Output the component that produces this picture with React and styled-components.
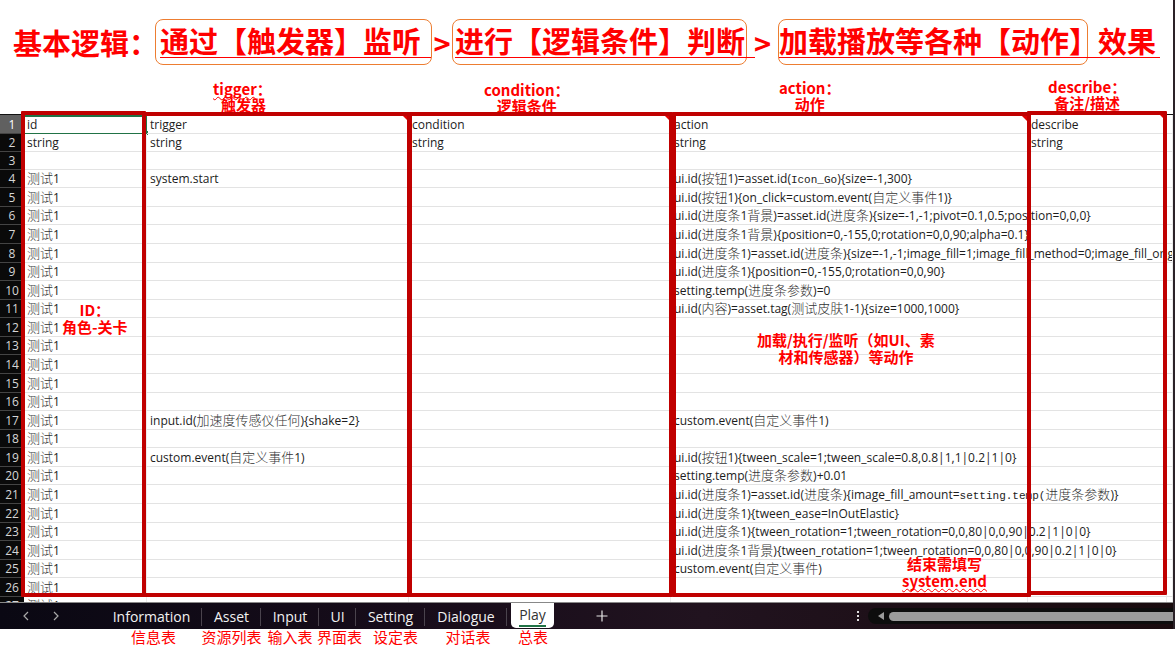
import React from "react";
import styled, { createGlobalStyle, css } from "styled-components";

const GlobalStyle = createGlobalStyle`
  * { box-sizing: border-box; }
  body { margin: 0; background: #fff; }
`;

const cjk = `"Noto Sans CJK SC", sans-serif`;
const columns = "24px 123px 262px 262px 1fr 139px 6px";
const tabColumns = "101px 101px 59px 58px 37px 69px 82px 52px 1fr";

const Page = styled.div`
  display: flex;
  flex-direction: column;
  height: 100vh;
  min-height: 400px;
  overflow: hidden;
  font-family: ${cjk};
  color: #f00;
`;

const Upper = styled.div`
  flex: 1;
  min-height: 0;
  display: flex;
  flex-direction: column;
  border-right: 2px solid #2b2228;
`;

const Title = styled.h1`
  display: flex;
  align-items: center;
  margin: 0;
  padding: 19px 0 0 13px;
  font-size: 29px;
  line-height: 36px;
  font-weight: 700;
  white-space: nowrap;
`;

const Lead = styled.span`
  flex: 0 0 142px;
  min-width: 0;
`;

const Step = styled.span`
  flex: 0 0 ${(p) => p.$width}px;
  min-width: 0;
  height: 46px;
  padding: 2px 0 0 ${(p) => p.$inset}px;
  border: 1px solid #ed7d31;
  border-radius: 8px;
`;

const Phrase = styled.span`
  display: inline-block;
  height: 36px;
  padding-right: ${(p) => p.$tail || 0}px;
  border-bottom: 1px solid #f00;
`;

const Arrow = styled.span`
  flex: 0 0 ${(p) => p.$width}px;
  min-width: 0;
  text-align: center;
`;

const Headings = styled.div`
  flex: 0 0 48px;
  display: grid;
  grid-template-columns: ${columns};
`;

const Heading = styled.div`
  grid-column: ${(p) => p.$col};
  padding: ${(p) => p.$top}px 0 0 ${(p) => p.$left}px;
  justify-self: start;
  font-size: 15px;
  line-height: 16px;
  font-weight: 700;
  text-align: center;
  white-space: nowrap;
`;

const Second = styled.div`
  padding-left: ${(p) => p.$shift || 0}px;
`;

const Misspelt = styled.span`
  text-decoration: underline wavy #f00 1px;
  text-underline-offset: 1px;
  text-decoration-skip-ink: none;
`;

const SheetArea = styled.div`
  position: relative;
  flex: 1;
  min-height: 0;
  display: flex;
`;

const Viewport = styled.div`
  flex: 1;
  min-width: 0;
  overflow: hidden;
  border-top: 1px solid #111;
  border-bottom: 1px solid #888;
`;

const Table = styled.table`
  width: 100%;
  table-layout: fixed;
  border-collapse: separate;
  border-spacing: 0;
  font-family: "Open Sans", ${cjk};
  font-size: 12px;
  line-height: 16px;
  color: #1c1c1c;

  tr { height: 18px; }
  tr:first-child, tr:nth-child(n + 5) { height: 19px; }
  tr:nth-child(7n + 6), tr:nth-child(7n + 9), tr:nth-child(7n + 11) { height: 18px; }
`;

const Col = styled.col`
  width: ${(p) => (p.$w ? `${p.$w}px` : "auto")};
`;

const RowHead = styled.th`
  padding: 1px 0 0;
  font-weight: 400;
  text-align: center;
  color: ${(p) => (p.$on ? "#fff" : "#d6d6d6")};
  background: ${(p) => (p.$on ? "#606060" : "#0a0a0a")};
  border-bottom: 1px solid #444;
`;

const Cell = styled.td`
  position: relative;
  padding: 1px 0 0 3px;
  white-space: nowrap;
  border-bottom: 1px solid #e3e3e3;
  border-right: 1px solid #ececec;
  ${(p) =>
    p.$selected &&
    css`
      padding-top: 0;
      border: 2px solid #217346;
      border-left: 0;
      border-bottom-width: 1px;
    `}
`;

const FillHandle = styled.span`
  position: absolute;
  right: -3px;
  bottom: -2px;
  width: 4px;
  height: 4px;
  background: #217346;
`;

const CommentMark = styled.span`
  position: absolute;
  top: 0;
  right: 0;
  border-top: 6px solid #e00000;
  border-left: 6px solid transparent;
`;

const Han = styled.span`
  font-family: ${cjk};
  font-size: 13px;
  line-height: 12px;
  font-weight: 300;
  color: #333;
`;

const Mono = styled.span`
  font-family: "Liberation Mono", monospace;
  font-size: 11px;
  line-height: 12px;
`;

const Frames = styled.div`
  position: absolute;
  inset: -3px 0 6px;
  display: grid;
  grid-template-columns: ${columns};
  pointer-events: none;
`;

const Frame = styled.div`
  position: relative;
  grid-row: 1;
  grid-column: ${(p) => p.$col};
  margin: ${(p) => p.$margin};
  border: 4px solid #c00000;
  border-radius: 1px;
`;

const Note = styled.div`
  position: absolute;
  left: ${(p) => p.$x}px;
  top: ${(p) => p.$y}px;
  font-size: 15px;
  line-height: 17px;
  font-weight: 700;
  text-align: center;
  white-space: nowrap;
`;

const TabBar = styled.nav`
  flex: 0 0 26px;
  display: grid;
  grid-template-columns: ${tabColumns};
  background: linear-gradient(90deg, #0a0813, #170c1a 35%, #21131f 60%, #190b0e);
`;

const Pager = styled.div`
  display: flex;
  align-items: center;
  gap: 16px;
  padding-left: 19px;
`;

const IconButton = styled.button`
  display: flex;
  padding: 0;
  border: 0;
  background: none;
  color: #a9a9a9;
`;

const Tab = styled.button`
  padding: 2px 0 0;
  border: 0;
  background: linear-gradient(#4a434d, #4a434d) right 5px / 1px 18px no-repeat;
  font-family: "Open Sans", sans-serif;
  font-size: 14px;
  line-height: 20px;
  text-align: center;
  color: #f2f2f2;
  ${(p) =>
    p.$on &&
    css`
      margin: 0 5px 1px 4px;
      padding: 0;
      border-radius: 0 0 5px 5px;
      background: #fff;
      color: #333;
    `}
`;

const TabText = styled.span`
  display: inline-block;
  border-bottom: ${(p) => (p.$on ? "2px solid #217346" : "0")};
`;

const BarEnd = styled.div`
  display: flex;
  align-items: center;
  justify-content: space-between;
  padding-left: 37px;
`;

const ScrollGroup = styled.div`
  display: flex;
  align-items: center;
  gap: 8px;
`;

const ScrollTrack = styled.div`
  display: flex;
  align-items: center;
  gap: 4px;
  width: 305px;
  height: 16px;
  padding-left: 9px;
  border-radius: 8px 0 0 8px;
  background: #0d0d0d;
`;

const Thumb = styled.div`
  flex: 1;
  height: 9px;
  border-radius: 5px 0 0 5px;
  background: #9b9b9b;
`;

const Captions = styled.div`
  flex: 0 0 23px;
  display: grid;
  grid-template-columns: ${tabColumns};
  font-size: 15px;
  line-height: 16px;
`;

const Caption = styled.span`
  grid-column: ${(p) => p.$col};
  justify-self: center;
  margin: 0 -4px;
  padding-left: ${(p) => p.$shift || 0}px;
  white-space: nowrap;
`;

const rows = {
  1: ["id", "trigger", "condition", "action", "describe"],
  2: ["string", "string", "string", "string", "string"],
  3: [],
  4: ["测试1", "system.start", "", "ui.id(按钮1)=asset.id(~Icon_Go~){size=-1,300}"],
  5: ["测试1", "", "", "ui.id(按钮1){on_click=custom.event(自定义事件1)}"],
  6: ["测试1", "", "", "ui.id(进度条1背景)=asset.id(进度条){size=-1,-1;pivot=0.1,0.5;position=0,0,0}"],
  7: ["测试1", "", "", "ui.id(进度条1背景){position=0,-155,0;rotation=0,0,90;alpha=0.1}"],
  8: ["测试1", "", "", "ui.id(进度条1)=asset.id(进度条){size=-1,-1;image_fill=1;image_fill_method=0;image_fill_origin=0}"],
  9: ["测试1", "", "", "ui.id(进度条1){position=0,-155,0;rotation=0,0,90}"],
  10: ["测试1", "", "", "setting.temp(进度条参数)=0"],
  11: ["测试1", "", "", "ui.id(内容)=asset.tag(测试皮肤1-1){size=1000,1000}"],
  17: ["测试1", "input.id(加速度传感仪任何){shake=2}", "", "custom.event(自定义事件1)"],
  19: ["测试1", "custom.event(自定义事件1)", "", "ui.id(按钮1){tween_scale=1;tween_scale=0.8,0.8|1,1|0.2|1|0}"],
  20: ["测试1", "", "", "setting.temp(进度条参数)+0.01"],
  21: ["测试1", "", "", "ui.id(进度条1)=asset.id(进度条){image_fill_amount=~setting.temp(~进度条参数)}"],
  22: ["测试1", "", "", "ui.id(进度条1){tween_ease=InOutElastic}"],
  23: ["测试1", "", "", "ui.id(进度条1){tween_rotation=1;tween_rotation=0,0,80|0,0,90|0.2|1|0|0}"],
  24: ["测试1", "", "", "ui.id(进度条1背景){tween_rotation=1;tween_rotation=0,0,80|0,0,90|0.2|1|0|0}"],
  25: ["测试1", "", "", "custom.event(自定义事件)"],
};

const rowNumbers = Array.from({ length: 27 }, (_, i) => i + 1);
const tabs = ["Information", "Asset", "Input", "UI", "Setting", "Dialogue", "Play"];

// Han runs and ~marked~ runs are set in their own faces.
function Formula({ text }) {
  return text
    .split(/(~[^~]+~|[\u4e00-\u9fff]+)/)
    .filter(Boolean)
    .map((part, i) => {
      if (part[0] === "~") return <Mono key={i}>{part.slice(1, -1)}</Mono>;
      if (/[\u4e00-\u9fff]/.test(part)) return <Han key={i}>{part}</Han>;
      return part;
    });
}

function Chevron({ d }) {
  return (
    <svg width="14" height="14" viewBox="0 0 14 14" fill="none" stroke="currentColor" strokeWidth="1.2">
      <path d={d} />
    </svg>
  );
}

function Sheet() {
  return (
    <Table>
      <colgroup>
        {[24, 123, 262, 262, 0, 139, 6].map((w, i) => (
          <Col key={i} $w={w} />
        ))}
      </colgroup>
      <tbody>
        {rowNumbers.map((n) => {
          const data = rows[n] || ["测试1"];
          return (
            <tr key={n}>
              <RowHead scope="row" $on={n === 1}>{n}</RowHead>
              {[0, 1, 2, 3, 4, 5].map((c) => (
                <Cell key={c} $selected={n === 1 && c === 0}>
                  <Formula text={data[c] || ""} />
                  {n === 1 && c === 0 && <FillHandle />}
                  {n === 1 && c > 0 && c < 5 && <CommentMark />}
                </Cell>
              ))}
            </tr>
          );
        })}
      </tbody>
    </Table>
  );
}

export default function App() {
  return (
    <Page>
      <GlobalStyle />
      <Upper>
        <Title>
          <Lead>基本逻辑：</Lead>
          <Step $width={277} $inset={4}><Phrase $tail={10}>通过【触发器】监听</Phrase></Step>
          <Arrow $width={20}>&gt;</Arrow>
          <Step $width={295} $inset={2}><Phrase $tail={10}>进行【逻辑条件】判断</Phrase></Step>
          <Arrow $width={31}>&gt;</Arrow>
          <Step $width={310} $inset={0}><Phrase $tail={4}>加载播放等各种【动作】效果</Phrase></Step>
        </Title>
        <Headings>
          <Heading $col={3} $top={16} $left={66}>
            <Misspelt>tigger</Misspelt>：
            <Second $shift={2}>触发器</Second>
          </Heading>
          <Heading $col={4} $top={17} $left={75}>
            condition：
            <Second>逻辑条件</Second>
          </Heading>
          <Heading $col={5} $top={15} $left={108}>
            action：
            <Second>动作</Second>
          </Heading>
          <Heading $col={6} $top={14} $left={20}>
            describe：
            <Second>备注/描述</Second>
          </Heading>
        </Headings>
        <SheetArea>
          <Viewport>
            <Sheet />
          </Viewport>
          <Frames>
            <Frame $col={2} $margin="0 1px 0 -3px">
              <Note $x={37} $y={186}>ID：<br />角色-关卡</Note>
            </Frame>
            <Frame $col={3} $margin="1px -2px 0 -5px" />
            <Frame $col={4} $margin="1px -2px 0 -1px" />
            <Frame $col={5} $margin="1px -3px 0 1px">
              <Note $x={81} $y={215}>加载/执行/监听（如UI、素<br />材和传感器）等动作</Note>
              <Note $x={226} $y={439}>结束需填写<br /><Misspelt>system.end</Misspelt></Note>
            </Frame>
            <Frame $col={6} $margin="0 0 2px -1px" />
          </Frames>
        </SheetArea>
        <TabBar aria-label="Sheets">
          <Pager>
            <IconButton aria-label="Previous sheet"><Chevron d="M9 3 5 7l4 4" /></IconButton>
            <IconButton aria-label="Next sheet"><Chevron d="m5 3 4 4-4 4" /></IconButton>
          </Pager>
          {tabs.map((t) => (
            <Tab key={t} $on={t === "Play"}><TabText $on={t === "Play"}>{t}</TabText></Tab>
          ))}
          <BarEnd>
            <IconButton aria-label="New sheet">
              <svg width="12" height="12" viewBox="0 0 12 12" stroke="#e6e6e6" strokeWidth="1.2">
                <path d="M6 .5v11M.5 6h11" />
              </svg>
            </IconButton>
            <ScrollGroup>
              <svg width="4" height="12" viewBox="0 0 4 12" fill="#ddd">
                <path d="M1 1h2v2H1zM1 5h2v2H1zM1 9h2v2H1z" />
              </svg>
              <ScrollTrack>
                <svg width="8" height="10" viewBox="0 0 8 10" fill="#9b9b9b">
                  <path d="M7 1v8L1 5z" />
                </svg>
                <Thumb />
              </ScrollTrack>
            </ScrollGroup>
          </BarEnd>
        </TabBar>
      </Upper>
      <Captions>
        <Caption $col={2} $shift={4}>信息表</Caption>
        <Caption $col={3}>资源列表</Caption>
        <Caption $col={4}>输入表</Caption>
        <Caption $col={5} $shift={4}>界面表</Caption>
        <Caption $col={6} $shift={10}>设定表</Caption>
        <Caption $col={7} $shift={4}>对话表</Caption>
        <Caption $col={8}>总表</Caption>
      </Captions>
    </Page>
  );
}
